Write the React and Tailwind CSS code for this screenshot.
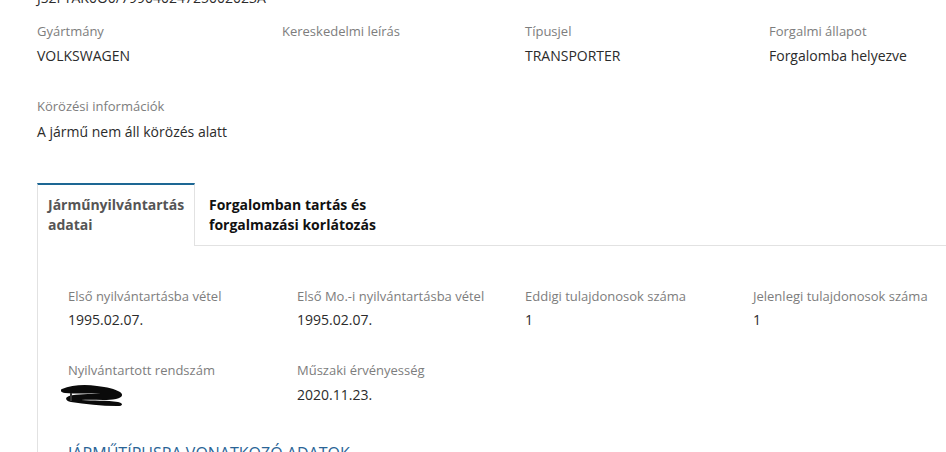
const Field = ({ label, children }) => (
  <div>
    <div className="text-[13px] leading-[20px] text-[#7d7d7d]">{label}</div>
    <div className="mt-[5px] text-[14px] leading-[20px] text-[#2b2b2b]">{children}</div>
  </div>
);

const Scribble = () => (
  <svg width="64" height="22" viewBox="0 0 64 22" className="-ml-[7px] mt-[-1px]">
    <path
      d="M1 5 C10 1 24 0 36 2 C46 3 54 5 59 8 C63 11 61 14 55 15 C44 17 32 15 20 16 C32 17 46 16 57 18 C62 19 63 22 56 22 C40 22 24 20 10 18 C5 17 3 14 8 12 C16 10 28 10 40 10 C28 9 14 10 4 9 C-1 8 -1 6 1 5 Z"
      fill="#0a0a0a"
    />
    <rect x="9" y="9" width="2" height="8" fill="#333" />
  </svg>
);

export default function App() {
  return (
    <div className="w-[946px] h-[452px] overflow-hidden bg-white font-['Open_Sans',sans-serif]">
      <div className="pl-[37px]">
        <div className="mt-[-12px] text-[14px] leading-[20px] text-[#2b2b2b]">JS2FYAK0O0/79904024725002023A</div>

        <div className="mt-[13px] grid grid-cols-[245px_243px_244px_1fr]">
          <Field label="Gyártmány">VOLKSWAGEN</Field>
          <Field label="Kereskedelmi leírás"></Field>
          <Field label="Típusjel">TRANSPORTER</Field>
          <Field label="Forgalmi állapot">Forgalomba helyezve</Field>
        </div>

        <div className="mt-[30px]">
          <div className="text-[13px] leading-[20px] text-[#7d7d7d]">Körözési információk</div>
          <div className="mt-[6px] text-[14px] leading-[20px] text-[#2b2b2b]">A jármű nem áll körözés alatt</div>
        </div>

        <div className="mt-[41px] flex">
          <div className="w-[158px] border-t-2 border-t-[#1d6794] border-l border-r border-[#e2e2e2] px-[10px] pt-[10px] pb-[11px] text-[14px] leading-[20px] font-bold text-[#555555]">
            Járműnyilvántartás
            <br />
            adatai
          </div>
          <div className="flex-1 border-b border-[#e2e2e2] pl-[14px] pt-[12px] text-[14px] leading-[20px] font-bold text-[#111111]">
            Forgalomban tartás és
            <br />
            forgalmazási korlátozás
          </div>
        </div>

        <div className="border-l border-[#e2e2e2] pl-[30px] pt-[40px] h-[300px]">
          <div className="grid grid-cols-[229px_228px_228px_1fr]">
            <div>
              <div className="text-[13px] leading-[20px] text-[#7d7d7d]">Első nyilvántartásba vétel</div>
              <div className="mt-[4px] text-[14px] leading-[20px] text-[#2b2b2b]">1995.02.07.</div>
            </div>
            <div>
              <div className="text-[13px] leading-[20px] text-[#7d7d7d]">Első Mo.-i nyilvántartásba vétel</div>
              <div className="mt-[4px] text-[14px] leading-[20px] text-[#2b2b2b]">1995.02.07.</div>
            </div>
            <div>
              <div className="text-[13px] leading-[20px] text-[#7d7d7d]">Eddigi tulajdonosok száma</div>
              <div className="mt-[4px] text-[14px] leading-[20px] text-[#2b2b2b]">1</div>
            </div>
            <div>
              <div className="text-[13px] leading-[20px] text-[#7d7d7d]">Jelenlegi tulajdonosok száma</div>
              <div className="mt-[4px] text-[14px] leading-[20px] text-[#2b2b2b]">1</div>
            </div>
          </div>

          <div className="mt-[30px] grid grid-cols-[229px_228px_228px_1fr]">
            <div>
              <div className="text-[13px] leading-[20px] text-[#7d7d7d]">Nyilvántartott rendszám</div>
              <div className="mt-[5px] h-[20px]">
                <Scribble />
              </div>
            </div>
            <div>
              <div className="text-[13px] leading-[20px] text-[#7d7d7d]">Műszaki érvényesség</div>
              <div className="mt-[5px] text-[14px] leading-[20px] text-[#2b2b2b]">2020.11.23.</div>
            </div>
          </div>

          <div className="mt-[36px] text-[16px] leading-[24px] uppercase text-[#2a6496]">Járműtípusra vonatkozó adatok</div>
        </div>
      </div>
    </div>
  );
}
